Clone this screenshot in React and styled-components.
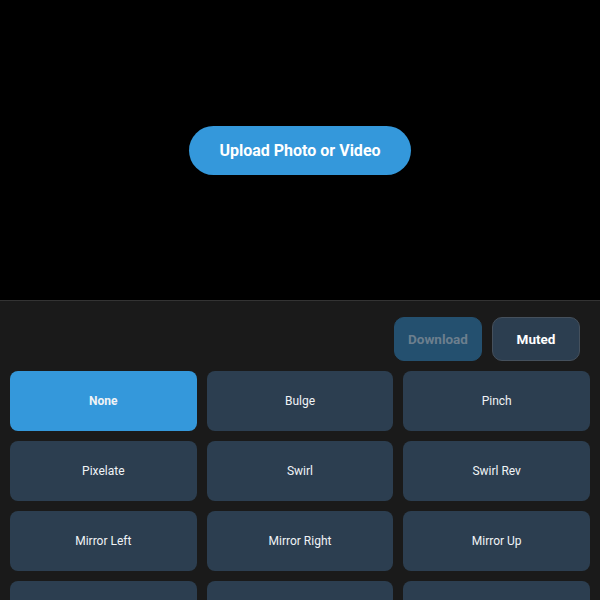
import React from "react";
import styled, { createGlobalStyle } from "styled-components";

const GlobalStyle = createGlobalStyle`
  html, body {
    margin: 0;
    padding: 0;
    background: #000;
    font-family: Roboto, "Liberation Sans", sans-serif;
  }
`;

const effects = [
  "None",
  "Bulge",
  "Pinch",
  "Pixelate",
  "Swirl",
  "Swirl Rev",
  "Mirror Left",
  "Mirror Right",
  "Mirror Up",
  "Mirror Down",
  "Kaleido",
  "Wave",
];

const App = () => {
  return (
    <Page>
      <GlobalStyle />
      <Stage>
        <UploadButton>Upload Photo or Video</UploadButton>
      </Stage>
      <Panel>
        <Actions>
          <ActionButton $variant="download" disabled>
            Download
          </ActionButton>
          <ActionButton>Muted</ActionButton>
        </Actions>
        <Grid>
          {effects.map((name, i) => (
            <Tile key={name} $active={i === 0}>
              {name}
            </Tile>
          ))}
        </Grid>
      </Panel>
    </Page>
  );
};

export default App;

const Page = styled.div`
  display: flex;
  flex-direction: column;
  min-height: 100vh;
  background: #000;
`;

const Stage = styled.div`
  height: 300px;
  display: flex;
  align-items: center;
  justify-content: center;
  background: #000;
`;

const UploadButton = styled.button`
  width: 222px;
  height: 49px;
  border: none;
  border-radius: 25px;
  background: #3498db;
  color: #fff;
  font-family: Roboto, "Liberation Sans", sans-serif;
  font-size: 16px;
  font-weight: 700;
  cursor: pointer;
`;

const Panel = styled.div`
  flex: 1;
  background: #1a1a1a;
  border-top: 1px solid #333;
  padding: 16px 10px 10px;
  display: flex;
  flex-direction: column;
  gap: 10px;
`;

const Actions = styled.div`
  display: flex;
  justify-content: flex-end;
  gap: 10px;
  padding-right: 10px;
`;

const ActionButton = styled.button`
  width: 88px;
  height: 44px;
  border-radius: 10px;
  border: 1px solid ${({ $variant }) => ($variant === "download" ? "#24506f" : "#45505c")};
  background: ${({ $variant }) => ($variant === "download" ? "#24506f" : "#2c3e50")};
  color: ${({ $variant }) => ($variant === "download" ? "#6c7f8e" : "#fff")};
  font-family: Roboto, "Liberation Sans", sans-serif;
  font-size: 13.5px;
  font-weight: 700;
`;

const Grid = styled.div`
  display: grid;
  grid-template-columns: repeat(3, 1fr);
  gap: 10px;
`;

const Tile = styled.button`
  height: 60px;
  border: none;
  border-radius: 8px;
  background: ${({ $active }) => ($active ? "#3498db" : "#2c3e50")};
  color: #f0f3f6;
  font-family: Roboto, "Liberation Sans", sans-serif;
  font-size: 12px;
  font-weight: ${({ $active }) => ($active ? 700 : 400)};
`;
